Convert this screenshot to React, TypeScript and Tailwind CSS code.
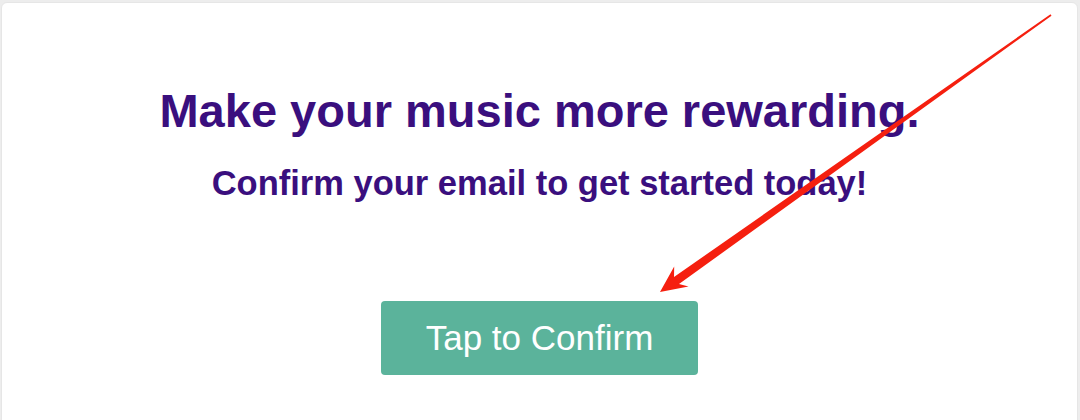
import React from "react";

// red annotation arrow drawn over the card
function Arrow() {
  return (
    <svg
      className="pointer-events-none absolute inset-0"
      width="1080"
      height="420"
      viewBox="0 0 1080 420"
    >
      <polygon
        fill="#f51f0f"
        points="1050.5,14.3 674.0,277.0 674.2,266.5 660,292 688.5,286.5 679.0,284.0 1051.5,15.7"
      />
    </svg>
  );
}

export default function App() {
  return (
    <div
      className="relative h-[420px] w-[1080px] overflow-hidden bg-[#ededed] pl-px pr-[2px] pt-[2px]"
      style={{ fontFamily: '"Liberation Sans", Arial, sans-serif' }}
    >
      <div className="flex h-[440px] flex-col items-center rounded-md border border-[#e6e6e6] bg-white">
        <h1 className="mt-[84px] text-[47px] font-bold leading-none text-[#3a0f7e]">
          Make your music more rewarding.
        </h1>
        <p className="mt-[32px] text-[34.5px] font-bold leading-none text-[#3a0f7e]">
          Confirm your email to get started today!
        </p>
        <button className="mt-[100px] flex h-[74px] w-[317px] items-center justify-center rounded-[4px] bg-[#5bb39b] text-[35px] leading-none text-white">
          Tap to Confirm
        </button>
      </div>
      <Arrow />
    </div>
  );
}
